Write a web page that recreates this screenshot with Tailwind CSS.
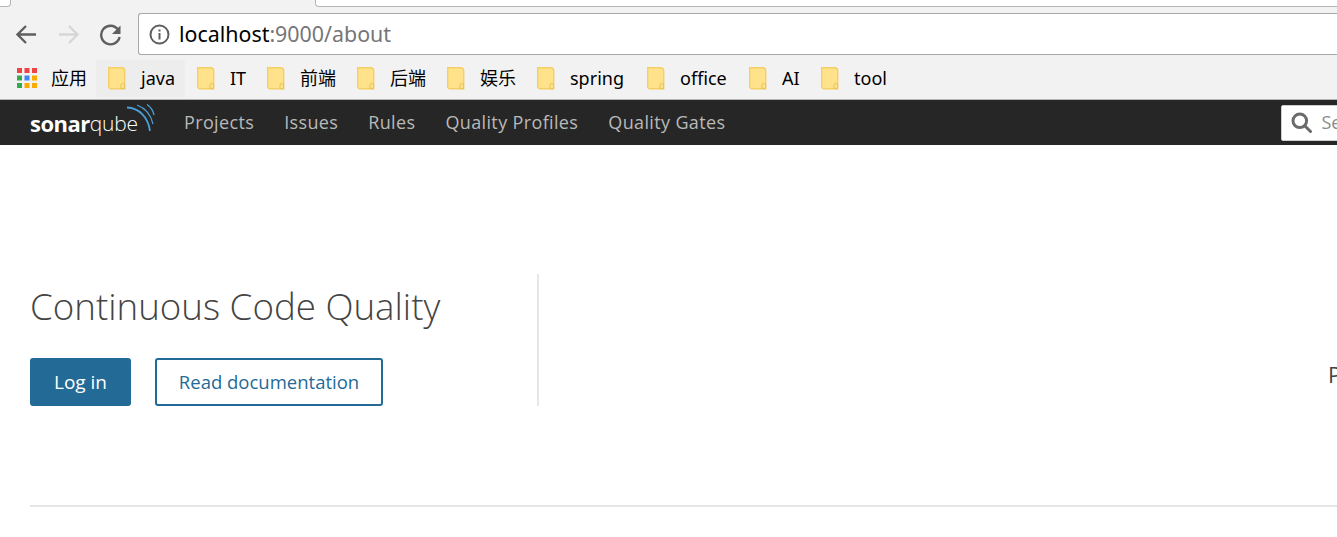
<!DOCTYPE html>
<html>
<head>
<meta charset="utf-8">
<script src="https://cdn.jsdelivr.net/npm/@tailwindcss/browser@4"></script>
</head>
<body class="w-[1337px] h-[537px] overflow-hidden bg-white font-['Open_Sans','Noto_Sans_CJK_SC',sans-serif]">
<!-- browser chrome -->
<div class="h-[100px] bg-[#f2f2f2] flex flex-col border-b border-[#b5b5b5]">
  <div class="h-[7px] flex shrink-0">
    <div class="w-[11px] bg-white rounded-br-[4px] border-r border-b border-[#b5b5b5]"></div>
    <div class="w-[304px]"></div>
    <div class="flex-1 bg-white rounded-bl-[4px] border-l border-b border-[#b5b5b5]"></div>
  </div>
  <div class="h-[42px] mt-[6px] flex shrink-0">
    <div class="w-[138px] flex items-center pl-[15px] gap-[19px] shrink-0">
      <svg class="w-[23px] h-[23px]" viewBox="0 0 23 23" fill="none" stroke="#5f5f5f" stroke-width="2.4"><path d="M21 11.500H3M11 3l-8.500 8.500L11 20"/></svg>
      <svg class="w-[23px] h-[23px]" viewBox="0 0 23 23" fill="none" stroke="#d6d6d6" stroke-width="2.4"><path d="M2 11.500h18M12 3l8.500 8.500L12 20"/></svg>
      <svg class="w-[23px] h-[23px]" viewBox="0 0 23 23" fill="none"><path d="M19 6.500A9.300 9.300 0 1 0 20.600 14" stroke="#5f5f5f" stroke-width="2.400"/><path d="M21.500 2.500v8.500H13z" fill="#5f5f5f"/></svg>
    </div>
    <div class="flex-1 bg-white border border-[#a9a9a9] border-r-0 rounded-l-[3px] flex items-center pl-[10px]">
      <svg class="w-[21px] h-[21px] shrink-0" viewBox="0 0 21 21" fill="none" stroke="#5f5f5f" stroke-width="2"><circle cx="10.500" cy="10.500" r="9"/><path d="M10.500 9v6.500M10.500 5.500v2"/></svg>
      <div class="ml-[9px] text-[21.4px] leading-none text-black font-['Noto_Sans',sans-serif]">localhost<span class="text-[#767676]">:9000/about</span></div>
    </div>
  </div>
  <div class="flex-1 flex items-center pl-[17px] pt-[2px] text-[18px] text-black font-['Noto_Sans','Noto_Sans_CJK_SC',sans-serif] leading-none">
    <svg class="w-[20px] h-[20px] shrink-0" viewBox="0 0 20 20">
      <rect x="0" y="0" width="5" height="5" fill="#ef4444"/><rect x="7.500" y="0" width="5" height="5" fill="#ef4444"/><rect x="15" y="0" width="5" height="5" fill="#ef4444"/>
      <rect x="0" y="7.500" width="5" height="5" fill="#34a853"/><rect x="7.500" y="7.500" width="5" height="5" fill="#4285f4"/><rect x="15" y="7.500" width="5" height="5" fill="#f9ab00"/>
      <rect x="0" y="15" width="5" height="5" fill="#34a853"/><rect x="7.500" y="15" width="5" height="5" fill="#f9ab00"/><rect x="15" y="15" width="5" height="5" fill="#f9ab00"/>
    </svg>
    <span class="ml-[14px] w-[36px]">应用</span>
    <div class="ml-[9px] h-[37px] w-[89px] pl-[12px] bg-[#ededed] flex items-center gap-[15px] rounded-[2px]">
      <svg class="w-[18px] h-[23px] shrink-0" viewBox="0 0 18 23"><path d="M.7.700h13a3 3 0 0 1 3 3v18h-14a2 2 0 0 1-2-2z" fill="#ffe28a" stroke="#f3cf66" stroke-width="1.400"/><path d="M13 21.700v-3.500a1.500 1.500 0 0 1 3.500 0v3.500z" fill="#ffe28a" stroke="#e8c255" stroke-width="1"/></svg>
      <span>java</span>
    </div>
    <div class="ml-[12px] flex items-center gap-[15px] w-[70px]">
      <svg class="w-[18px] h-[23px] shrink-0" viewBox="0 0 18 23"><path d="M.7.700h13a3 3 0 0 1 3 3v18h-14a2 2 0 0 1-2-2z" fill="#ffe28a" stroke="#f3cf66" stroke-width="1.400"/><path d="M13 21.700v-3.500a1.500 1.500 0 0 1 3.500 0v3.500z" fill="#ffe28a" stroke="#e8c255" stroke-width="1"/></svg>
      <span>IT</span>
    </div>
    <div class="flex items-center gap-[15px] w-[90px]">
      <svg class="w-[18px] h-[23px] shrink-0" viewBox="0 0 18 23"><path d="M.7.700h13a3 3 0 0 1 3 3v18h-14a2 2 0 0 1-2-2z" fill="#ffe28a" stroke="#f3cf66" stroke-width="1.400"/><path d="M13 21.700v-3.500a1.500 1.500 0 0 1 3.500 0v3.500z" fill="#ffe28a" stroke="#e8c255" stroke-width="1"/></svg>
      <span>前端</span>
    </div>
    <div class="flex items-center gap-[15px] w-[90px]">
      <svg class="w-[18px] h-[23px] shrink-0" viewBox="0 0 18 23"><path d="M.7.700h13a3 3 0 0 1 3 3v18h-14a2 2 0 0 1-2-2z" fill="#ffe28a" stroke="#f3cf66" stroke-width="1.400"/><path d="M13 21.700v-3.500a1.500 1.500 0 0 1 3.500 0v3.500z" fill="#ffe28a" stroke="#e8c255" stroke-width="1"/></svg>
      <span>后端</span>
    </div>
    <div class="flex items-center gap-[15px] w-[90px]">
      <svg class="w-[18px] h-[23px] shrink-0" viewBox="0 0 18 23"><path d="M.7.700h13a3 3 0 0 1 3 3v18h-14a2 2 0 0 1-2-2z" fill="#ffe28a" stroke="#f3cf66" stroke-width="1.400"/><path d="M13 21.700v-3.500a1.500 1.500 0 0 1 3.500 0v3.500z" fill="#ffe28a" stroke="#e8c255" stroke-width="1"/></svg>
      <span>娱乐</span>
    </div>
    <div class="flex items-center gap-[15px] w-[110px]">
      <svg class="w-[18px] h-[23px] shrink-0" viewBox="0 0 18 23"><path d="M.7.700h13a3 3 0 0 1 3 3v18h-14a2 2 0 0 1-2-2z" fill="#ffe28a" stroke="#f3cf66" stroke-width="1.400"/><path d="M13 21.700v-3.500a1.500 1.500 0 0 1 3.500 0v3.500z" fill="#ffe28a" stroke="#e8c255" stroke-width="1"/></svg>
      <span>spring</span>
    </div>
    <div class="flex items-center gap-[15px] w-[102px]">
      <svg class="w-[18px] h-[23px] shrink-0" viewBox="0 0 18 23"><path d="M.7.700h13a3 3 0 0 1 3 3v18h-14a2 2 0 0 1-2-2z" fill="#ffe28a" stroke="#f3cf66" stroke-width="1.400"/><path d="M13 21.700v-3.500a1.500 1.500 0 0 1 3.500 0v3.500z" fill="#ffe28a" stroke="#e8c255" stroke-width="1"/></svg>
      <span>office</span>
    </div>
    <div class="flex items-center gap-[15px] w-[72px]">
      <svg class="w-[18px] h-[23px] shrink-0" viewBox="0 0 18 23"><path d="M.7.700h13a3 3 0 0 1 3 3v18h-14a2 2 0 0 1-2-2z" fill="#ffe28a" stroke="#f3cf66" stroke-width="1.400"/><path d="M13 21.700v-3.500a1.500 1.500 0 0 1 3.500 0v3.500z" fill="#ffe28a" stroke="#e8c255" stroke-width="1"/></svg>
      <span>AI</span>
    </div>
    <div class="flex items-center gap-[15px]">
      <svg class="w-[18px] h-[23px] shrink-0" viewBox="0 0 18 23"><path d="M.7.700h13a3 3 0 0 1 3 3v18h-14a2 2 0 0 1-2-2z" fill="#ffe28a" stroke="#f3cf66" stroke-width="1.400"/><path d="M13 21.700v-3.500a1.500 1.500 0 0 1 3.500 0v3.500z" fill="#ffe28a" stroke="#e8c255" stroke-width="1"/></svg>
      <span>tool</span>
    </div>
  </div>
</div>
<!-- nav -->
<div class="h-[45px] bg-[#262626] flex items-center pl-[30px]">
  <div class="w-[125px] h-[32px] pb-[4px] flex items-end shrink-0 relative">
    <span class="text-white text-[22px] leading-[24px] font-bold tracking-[-0.5px]">sonar</span><span class="text-white text-[21px] leading-[24px] font-light tracking-[-0.2px]">qube</span>
    <svg class="absolute left-[97px] top-[-3px] w-[30px] h-[30px]" viewBox="0 0 30 30" fill="none" stroke-width="1.300">
      <path d="M0 3.500C12 4 21 13 23 27" stroke="#4b9fd5" stroke-width="1.800"/>
      <path d="M10 1C18 4 24 11 26 20" stroke="#4b9fd5"/>
      <path d="M20 .500C23 2.500 26 6 27 11" stroke="#4b9fd5"/>
    </svg>
  </div>
  <nav class="flex items-center gap-[30px] ml-[29px] text-[18px] text-[#b9b9b9] tracking-[0.36px] whitespace-nowrap">
    <span>Projects</span><span>Issues</span><span>Rules</span><span>Quality Profiles</span><span>Quality Gates</span>
  </nav>
  <div class="ml-[556px] w-[80px] h-[36px] shrink-0 bg-white border border-[#cfcfcf] rounded-[2px] flex items-center pl-[9px] gap-[9px] text-[18px] text-[#8a8a8a]">
    <svg class="w-[21px] h-[21px] shrink-0" viewBox="0 0 21 21" fill="none" stroke="#6b6b6b" stroke-width="3"><circle cx="8.800" cy="8.800" r="6.800"/><path d="M14 14l5.500 5.500" stroke-linecap="round"/></svg>
    <span>Search</span>
  </div>
</div>
<!-- content -->
<div class="pl-[30px] pt-[129px] w-[1500px]">
  <div class="flex h-[132px]">
    <div class="shrink-0 border-r-[2px] border-[#e6e6e6] w-[509px]">
      <h1 class="text-[36.700px] leading-[64px] font-light text-[#444] whitespace-nowrap">Continuous Code Quality</h1>
      <div class="flex gap-[24px] mt-[20px]">
        <div class="w-[101px] h-[48px] bg-[#236a97] rounded-[3px] flex items-center justify-center text-white text-[19px]">Log in</div>
        <div class="w-[228px] h-[48px] border-2 border-[#236a97] rounded-[3px] flex items-center justify-center text-[#236a97] text-[18.500px]">Read documentation</div>
      </div>
    </div>
    <div class="pl-[789px] pt-[84px] text-[22px] leading-[32px] text-[#444] whitespace-nowrap">Projects</div>
  </div>
  <div class="mt-[99px] border-t-[2px] border-[#e6e6e6]"></div>
</div>
</body>
</html>
